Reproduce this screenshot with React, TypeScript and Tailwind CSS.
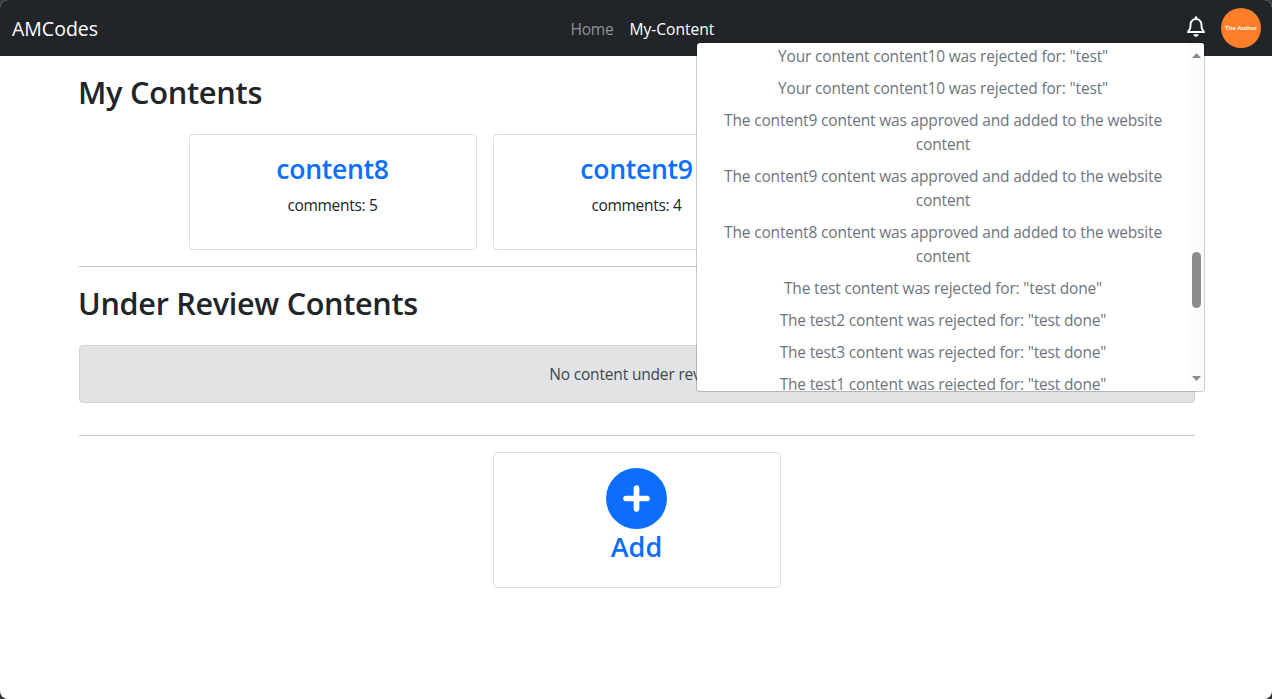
import { FaCirclePlus, FaRegBell } from "react-icons/fa6";

const notifications = [
  { lines: ['Your content content10 was rejected for: "test"'] },
  { lines: ['Your content content10 was rejected for: "test"'] },
  { lines: ["The content9 content was approved and added to the website", "content"] },
  { lines: ["The content9 content was approved and added to the website", "content"] },
  { lines: ["The content8 content was approved and added to the website", "content"] },
  { lines: ['The test content was rejected for: "test done"'] },
  { lines: ['The test2 content was rejected for: "test done"'] },
  { lines: ['The test3 content was rejected for: "test done"'] },
  { lines: ['The test1 content was rejected for: "test done"'] },
];

function Navbar() {
  return (
    <nav className="relative flex h-14 items-center justify-between bg-[#212529] pr-[11px] pl-3">
      <a className="pt-px text-[19.5px] leading-[30px] text-white">AMCodes</a>
      <div className="absolute left-[570.5px] flex gap-4 pt-px text-[15.6px] leading-6">
        <a className="tracking-[-0.3px] text-[#909294]">Home</a>
        <a className="text-white">My-Content</a>
      </div>
      <div className="flex items-center gap-4">
        <FaRegBell className="mb-[3px] h-[21px] w-[18px] text-white" />
        <div className="flex size-10 items-center justify-center rounded-full bg-[#fd7e28] font-['Liberation_Sans'] text-[6px] font-bold whitespace-nowrap text-white">
          The Author
        </div>
      </div>
    </nav>
  );
}

function ContentCard({ title, comments }: { title?: string; comments?: number }) {
  return (
    <div className="h-[116px] w-72 rounded-[4px] border border-[#dfdfdf] bg-white pt-[17px] text-center">
      {title && (
        <>
          <h3 className="mb-[7px] pr-px text-[26.6px] leading-[34px] font-semibold tracking-[-0.3px] text-[#0d6efd]">{title}</h3>
          <p className="pr-px text-[15.5px] leading-6 tracking-[-0.3px] text-[#212529]">comments: {comments}</p>
        </>
      )}
    </div>
  );
}

function NotificationMenu() {
  return (
    <div className="absolute top-[42px] left-[696px] flex h-[350px] w-[509px] overflow-hidden rounded-[4px] border border-black/20 bg-white bg-clip-padding">
      <ul className="flex flex-1 flex-col gap-2 pt-px text-center text-[15.5px] leading-6 tracking-[-0.17px] text-[#6c757d]">
        {notifications.map((item, index) => (
          <li key={index} className="shrink-0">
            {item.lines.map((line) => (
              <div key={line} className="whitespace-nowrap">{line}</div>
            ))}
          </li>
        ))}
      </ul>
      <div className="flex w-[15px] flex-col items-center bg-[#fcfcfc] pt-[10px] pb-[10px]">
        <svg className="h-[5px] w-[9px]" viewBox="0 0 9 5"><path d="M0 5 4.5 0 9 5Z" fill="#8b8b8b" /></svg>
        <div className="mt-[194px] h-14 w-[9px] rounded-full bg-[#8b8b8b]" />
        <svg className="mt-auto h-[5px] w-[9px]" viewBox="0 0 9 5"><path d="M0 0H9L4.5 5Z" fill="#8b8b8b" /></svg>
      </div>
    </div>
  );
}

export default function App() {
  return (
    <div className="h-[699px] bg-[#38383a] font-['Open_Sans','Noto_Sans',sans-serif]">
      <div className="relative h-full overflow-hidden rounded-[8px] bg-white text-[#212529]">
        <Navbar />
        <main className="ml-[79px] w-[1116px] pt-[17px]">
          <h2 className="-ml-px text-[30.8px] leading-[38px] font-semibold tracking-[-0.3px]">My Contents</h2>
          <div className="mt-[23px] flex justify-center gap-4">
            <ContentCard title="content8" comments={5} />
            <ContentCard title="content9" comments={4} />
            <ContentCard />
          </div>
          <hr className="mt-4 border-[#c7c8c9]" />
          <h2 className="mt-[17px] -ml-px text-[30.6px] leading-[38px] font-semibold tracking-[-0.3px]">Under Review Contents</h2>
          <div className="mt-[23px] flex h-[58px] items-center justify-center rounded-[4px] border border-[#d3d4d6] bg-[#e2e3e5] text-[15.5px] leading-6 tracking-[-0.17px] text-[#41464b]">
            No content under review
          </div>
          <hr className="mt-8 border-[#c7c8c9]" />
          <div className="mx-auto mt-4 flex h-[136px] w-72 flex-col items-center rounded-[4px] border border-[#dfdfdf] pt-[15px] pr-px text-[#0d6efd]">
            <FaCirclePlus className="size-[61px]" />
            <span className="mt-px text-[27px] leading-[34px] font-semibold">Add</span>
          </div>
        </main>
        <NotificationMenu />
      </div>
    </div>
  );
}
